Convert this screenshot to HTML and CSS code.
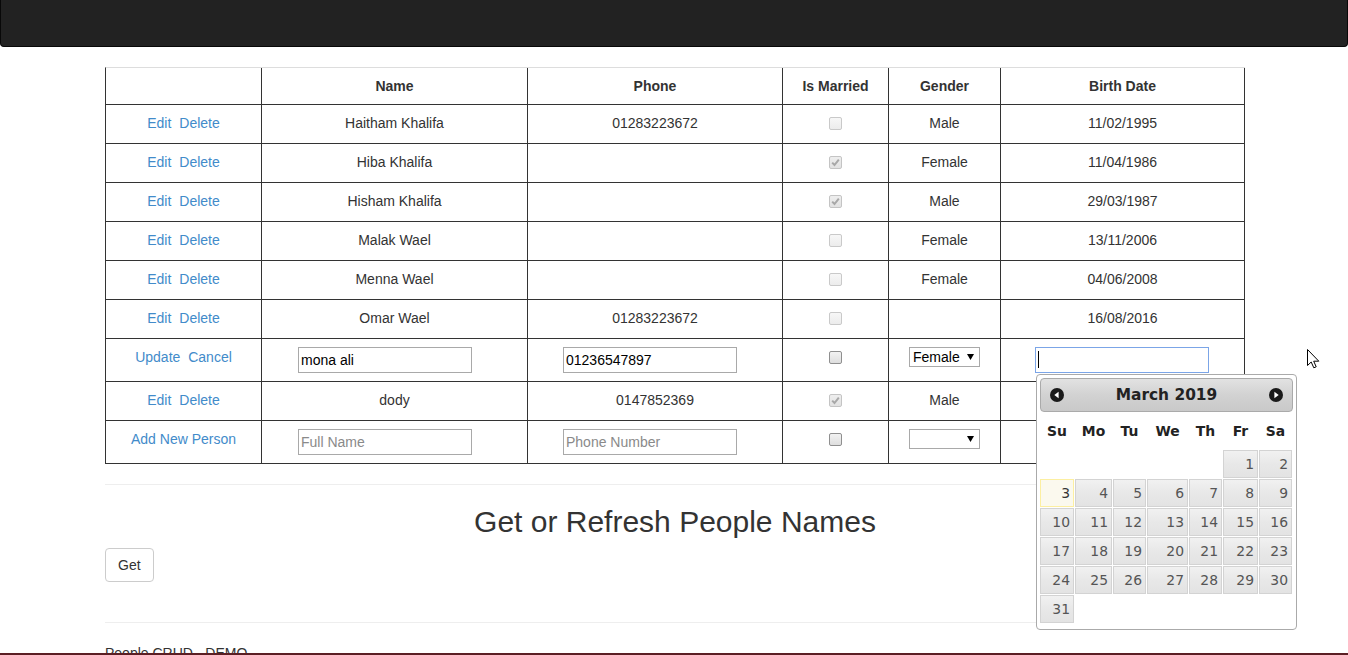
FILE: index.html
```html
<!DOCTYPE html>
<html>
<head>
<meta charset="utf-8">
<title>People CRUD</title>
<link rel="stylesheet" href="styles.css">
</head>
<body>
<nav class="navbar"></nav>

<div class="container">
  <table class="people">
    <thead>
      <tr>
        <th class="c1"></th>
        <th class="c2">Name</th>
        <th class="c3">Phone</th>
        <th class="c4">Is Married</th>
        <th class="c5">Gender</th>
        <th class="c6">Birth Date</th>
      </tr>
    </thead>
    <tbody>
      <tr>
        <td><a href="#">Edit</a> <a class="second" href="#">Delete</a></td>
        <td>Haitham Khalifa</td>
        <td>01283223672</td>
        <td><span class="cb dis"></span></td>
        <td>Male</td>
        <td>11/02/1995</td>
      </tr>
      <tr>
        <td><a href="#">Edit</a> <a class="second" href="#">Delete</a></td>
        <td>Hiba Khalifa</td>
        <td></td>
        <td><span class="cb dis chk"><svg viewBox="0 0 11 11" width="11" height="11"><path d="M2.2 5.6 L4.5 8 L8.8 2.6" fill="none" stroke="#a8a8a8" stroke-width="2"/></svg></span></td>
        <td>Female</td>
        <td>11/04/1986</td>
      </tr>
      <tr>
        <td><a href="#">Edit</a> <a class="second" href="#">Delete</a></td>
        <td>Hisham Khalifa</td>
        <td></td>
        <td><span class="cb dis chk"><svg viewBox="0 0 11 11" width="11" height="11"><path d="M2.2 5.6 L4.5 8 L8.8 2.6" fill="none" stroke="#a8a8a8" stroke-width="2"/></svg></span></td>
        <td>Male</td>
        <td>29/03/1987</td>
      </tr>
      <tr>
        <td><a href="#">Edit</a> <a class="second" href="#">Delete</a></td>
        <td>Malak Wael</td>
        <td></td>
        <td><span class="cb dis"></span></td>
        <td>Female</td>
        <td>13/11/2006</td>
      </tr>
      <tr>
        <td><a href="#">Edit</a> <a class="second" href="#">Delete</a></td>
        <td>Menna Wael</td>
        <td></td>
        <td><span class="cb dis"></span></td>
        <td>Female</td>
        <td>04/06/2008</td>
      </tr>
      <tr>
        <td><a href="#">Edit</a> <a class="second" href="#">Delete</a></td>
        <td>Omar Wael</td>
        <td>01283223672</td>
        <td><span class="cb dis"></span></td>
        <td></td>
        <td>16/08/2016</td>
      </tr>
      <tr class="tall">
        <td><a href="#">Update</a> <a class="second" href="#">Cancel</a></td>
        <td><input class="field f-name" type="text" value="mona ali"></td>
        <td><input class="field f-phone" type="text" value="01236547897"></td>
        <td><span class="cb en"></span></td>
        <td><span class="sel"><select><option>Female</option><option>Male</option></select><svg class="arrow" viewBox="0 0 7 6" width="7" height="6"><path d="M0 0 H7 L3.5 6 Z" fill="#000"/></svg></span></td>
        <td><span class="date-wrap"><input class="field f-date focus" type="text" value=""></span></td>
      </tr>
      <tr>
        <td><a href="#">Edit</a> <a class="second" href="#">Delete</a></td>
        <td>dody</td>
        <td>0147852369</td>
        <td><span class="cb dis chk"><svg viewBox="0 0 11 11" width="11" height="11"><path d="M2.2 5.6 L4.5 8 L8.8 2.6" fill="none" stroke="#a8a8a8" stroke-width="2"/></svg></span></td>
        <td>Male</td>
        <td></td>
      </tr>
      <tr class="tall">
        <td><a href="#">Add New Person</a></td>
        <td><input class="field f-name" type="text" placeholder="Full Name"></td>
        <td><input class="field f-phone" type="text" placeholder="Phone Number"></td>
        <td><span class="cb en"></span></td>
        <td><span class="sel"><select><option></option><option>Male</option><option>Female</option></select><svg class="arrow" viewBox="0 0 7 6" width="7" height="6"><path d="M0 0 H7 L3.5 6 Z" fill="#000"/></svg></span></td>
        <td><input class="field f-date covered" type="text"></td>
      </tr>
    </tbody>
  </table>

  <hr class="sep">
  <h2 class="title">Get or Refresh People Names</h2>
  <button class="btn" type="button">Get</button>
  <hr class="sep sep-bottom">
  <p class="footer">People CRUD - DEMO</p>
</div>

<div class="datepicker">
  <div class="dp-head">
    <svg class="dp-nav" viewBox="0 0 14 14" width="14" height="14"><circle cx="7" cy="7" r="7" fill="#1a1a1a"/><path d="M4.3 7 L8.6 3.8 V10.2 Z" fill="#fff"/></svg>
    <span class="dp-title">March 2019</span>
    <svg class="dp-nav" viewBox="0 0 14 14" width="14" height="14"><circle cx="7" cy="7" r="7" fill="#1a1a1a"/><path d="M9.7 7 L5.4 3.8 V10.2 Z" fill="#fff"/></svg>
  </div>
  <div class="dp-grid dp-week">
    <span>Su</span><span>Mo</span><span>Tu</span><span>We</span><span>Th</span><span>Fr</span><span>Sa</span>
  </div>
  <div class="dp-grid dp-days">
    <span class="empty"></span><span class="empty"></span><span class="empty"></span><span class="empty"></span><span class="empty"></span>
    <a href="#">1</a><a href="#">2</a>
    <a class="today" href="#">3</a><a href="#">4</a><a href="#">5</a><a href="#">6</a><a href="#">7</a><a href="#">8</a><a href="#">9</a>
    <a href="#">10</a><a href="#">11</a><a href="#">12</a><a href="#">13</a><a href="#">14</a><a href="#">15</a><a href="#">16</a>
    <a href="#">17</a><a href="#">18</a><a href="#">19</a><a href="#">20</a><a href="#">21</a><a href="#">22</a><a href="#">23</a>
    <a href="#">24</a><a href="#">25</a><a href="#">26</a><a href="#">27</a><a href="#">28</a><a href="#">29</a><a href="#">30</a>
    <a href="#">31</a>
  </div>
</div>

<svg class="cursor" viewBox="0 0 13 20" width="13" height="20"><path d="M0.5 0.5 V16.5 L4.2 13 L6.8 18.8 L9.2 17.8 L6.7 12.2 H11.8 Z" fill="#fff" stroke="#000" stroke-width="1"/></svg>

<div class="taskbar-line"></div>
</body>
</html>
```

FILE: styles.css
```css
* { box-sizing: border-box; }

html, body {
  margin: 0;
  padding: 0;
  background: #fff;
}

body {
  font-family: "Liberation Sans", Arial, Helvetica, sans-serif;
  font-size: 14px;
  line-height: 20px;
  color: #333;
  overflow: hidden;
  height: 655px;
}

a { color: #428bca; text-decoration: none; }

.navbar {
  height: 47px;
  background: #222;
  border: 1px solid #080808;
  border-top: none;
  border-radius: 0 0 4px 4px;
  margin: 0 0 20px 0;
}

.container {
  width: 1140px;
  margin-left: 105px;
}

.people {
  width: 1140px;
  table-layout: fixed;
  border-collapse: separate;
  border-spacing: 0;
  border-top: 1px solid #ddd;
  border-left: 1px solid #333;
}

.people th,
.people td {
  border-right: 1px solid #333;
  border-bottom: 1px solid #333;
  padding: 8px;
  text-align: center;
  vertical-align: top;
  height: 39px;
  white-space: nowrap;
  overflow: visible;
}

.people th { font-weight: bold; height: 37px; }
.people tr.tall td { height: 43px; }

.c1 { width: 156px; }
.c2 { width: 266px; }
.c3 { width: 255px; }
.c4 { width: 106px; }
.c5 { width: 112px; }
.c6 { width: 244px; }

.second { margin-left: 4px; }

.field {
  display: inline-block;
  vertical-align: top;
  width: 174px;
  height: 26px;
  border: 1px solid #a9a9a9;
  padding: 1px 2px;
  font-family: "Liberation Sans", Arial, sans-serif;
  font-size: 14px;
  color: #000;
  background: #fff;
  outline: none;
  margin: 0;
}
.field::placeholder { color: #8a8a8a; }
.f-name { margin-right: 19px; }
.f-phone { margin-right: 10px; }
.f-date { margin-right: 2px; }
.f-date.covered { visibility: hidden; }
.date-wrap .f-date { margin-right: 0; }
.field.focus { border-color: #7ba5e7; }

.date-wrap {
  position: relative;
  display: inline-block;
  vertical-align: top;
  margin-right: 2px;
}
.date-wrap::after {
  content: "";
  position: absolute;
  left: 3px;
  top: 4px;
  width: 1px;
  height: 17px;
  background: #000;
}

.cb {
  display: inline-block;
  vertical-align: top;
  width: 13px;
  height: 13px;
  margin-top: 4px;
  border: 1px solid #c9c9c9;
  border-radius: 2px;
  background: linear-gradient(#f7f7f7, #ececec);
  position: relative;
}
.cb svg { display: block; position: absolute; left: 0; top: 0; }
.cb.chk { background: linear-gradient(#eeeeee, #e2e2e2); border-color: #c4c4c4; }
.cb.en { border-color: #8f8f8f; background: linear-gradient(#f2f2f2, #dedede); }

.sel {
  display: inline-flex;
  align-items: center;
  width: 71px;
  height: 20px;
  border: 1px solid #a9a9a9;
  background: #fff;
  vertical-align: top;
}
.sel select {
  appearance: none;
  -webkit-appearance: none;
  border: none;
  background: transparent;
  font-family: "Liberation Sans", Arial, sans-serif;
  font-size: 14px;
  color: #000;
  padding: 0 0 0 3px;
  margin: 0;
  flex: 1;
  min-width: 0;
  height: 18px;
  line-height: 18px;
  outline: none;
}
.sel .arrow { margin-right: 5px; flex: none; }

.sep {
  border: 0;
  border-top: 1px solid #eee;
  margin: 20px 0;
  height: 0;
}
.sep-bottom { margin-top: 40px; }

.title {
  font-size: 30px;
  font-weight: 500;
  line-height: 33px;
  text-align: center;
  margin: 20px 0 10px;
  color: #333;
}

.btn {
  display: block;
  height: 34px;
  padding: 6px 12px;
  font-family: "Liberation Sans", Arial, sans-serif;
  font-size: 14px;
  line-height: 20px;
  color: #333;
  background: #fff;
  border: 1px solid #ccc;
  border-radius: 4px;
}

.footer { margin: 0; line-height: 20px; }

/* datepicker overlay */
.datepicker {
  position: absolute;
  left: 1036px;
  top: 374px;
  width: 261px;
  height: 256px;
  padding: 3px 3px 6px;
  background: #fff;
  border: 1px solid #aaa;
  border-radius: 4px;
  font-family: "DejaVu Sans", Verdana, sans-serif;
  color: #222;
}

.dp-head {
  height: 34px;
  border: 1px solid #aaa;
  border-radius: 4px;
  background: linear-gradient(#e2e2e2, #d2d2d2 50%, #c9c9c9);
  display: flex;
  align-items: center;
  justify-content: space-between;
  padding: 0 9px 0 9px;
}
.dp-nav { display: block; }
.dp-title {
  font-size: 15.4px;
  font-weight: bold;
  color: #222;
}

.dp-grid {
  display: grid;
  grid-template-columns: 34px 37px 33px 41px 33px 35px 33px;
  column-gap: 1px;
}

.dp-week {
  height: 38px;
  align-items: center;
  font-size: 13.9px;
  font-weight: bold;
  text-align: center;
  color: #222;
}

.dp-days {
  grid-auto-rows: 28px;
  row-gap: 1px;
  font-size: 13.9px;
}
.dp-days a {
  display: flex;
  align-items: center;
  justify-content: flex-end;
  padding-right: 3px;
  border: 1px solid #d3d3d3;
  background: linear-gradient(#f1f1f1, #e8e8e8 50%, #e3e3e3);
  color: #555;
}
.dp-days a.today {
  border-color: #fcefa1;
  background: #fbf9ee;
  color: #363636;
}

.cursor {
  position: absolute;
  left: 1307px;
  top: 349px;
}

.taskbar-line {
  position: fixed;
  left: 0;
  right: 0;
  bottom: 0;
  height: 2px;
  background: #5b1f24;
}
```
